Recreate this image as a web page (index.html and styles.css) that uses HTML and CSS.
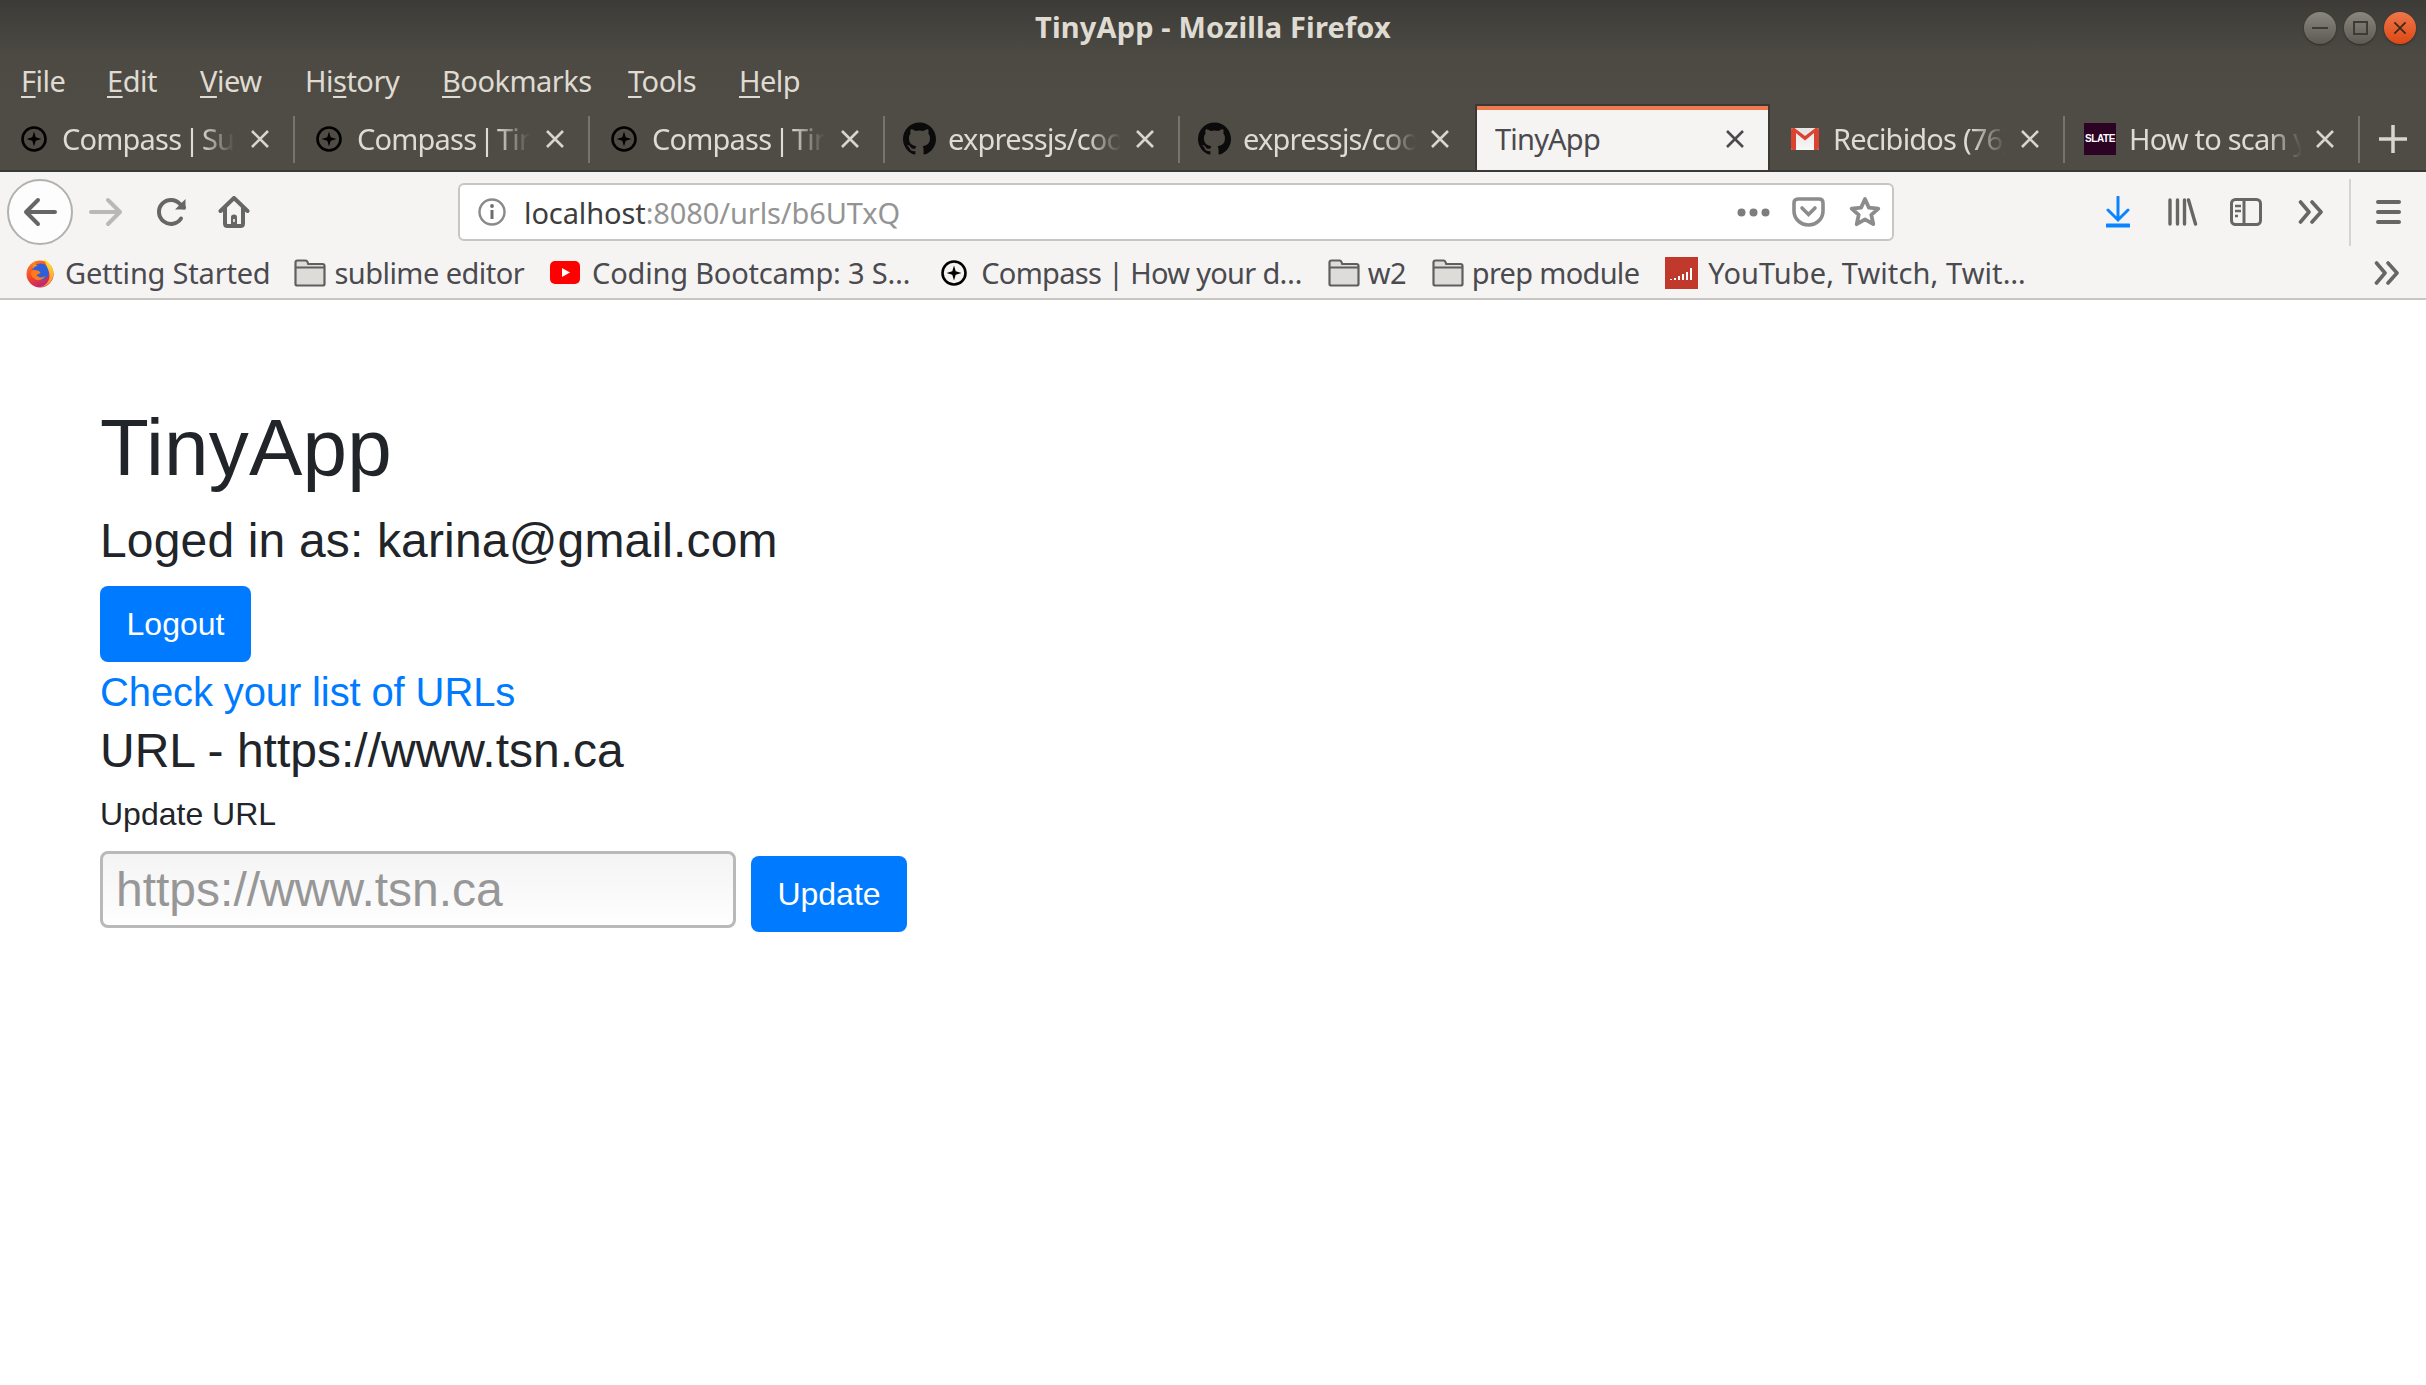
FILE: index.html
```html
<!DOCTYPE html>
<html lang="en">
<head>
  <meta charset="UTF-8">
  <title>TinyApp - Mozilla Firefox</title>
  <link rel="stylesheet" href="styles.css">
</head>
<body>
  <svg class="defs" width="0" height="0">
    <defs>
      <linearGradient id="fx-body" x1="0" y1="0" x2="0.6" y2="1">
        <stop offset="0" stop-color="#ff8a1e"/>
        <stop offset="0.55" stop-color="#f0442c"/>
        <stop offset="1" stop-color="#b8217a"/>
      </linearGradient>
      <linearGradient id="fx-flame" x1="0" y1="0" x2="0" y2="1">
        <stop offset="0" stop-color="#ffe03a"/>
        <stop offset="1" stop-color="#ff8f1e"/>
      </linearGradient>
      <linearGradient id="gmail-env" x1="0" y1="0" x2="0" y2="1">
        <stop offset="0" stop-color="#e4e4e4"/>
        <stop offset="1" stop-color="#f7f7f7"/>
      </linearGradient>
    </defs>
    <symbol id="compass" viewBox="0 0 26 26">
      <circle cx="13" cy="13" r="11.5" fill="none" stroke="#000" stroke-width="2.6"/>
      <path d="M13 5.5l1.7 5.8 5.8 1.7-5.8 1.7-1.7 5.8-1.7-5.8-5.8-1.7 5.8-1.7z" fill="#000"/>
    </symbol>
    <symbol id="github" viewBox="0 0 24 24">
      <path fill="#0b0b0b" d="M12 .297c-6.63 0-12 5.373-12 12 0 5.303 3.438 9.8 8.205 11.385.6.113.82-.258.82-.577 0-.285-.01-1.04-.015-2.04-3.338.724-4.042-1.61-4.042-1.61C4.422 18.07 3.633 17.7 3.633 17.7c-1.087-.744.084-.729.084-.729 1.205.084 1.838 1.236 1.838 1.236 1.07 1.835 2.809 1.305 3.495.998.108-.776.417-1.305.76-1.605-2.665-.3-5.466-1.332-5.466-5.93 0-1.31.465-2.38 1.235-3.22-.135-.303-.54-1.523.105-3.176 0 0 1.005-.322 3.3 1.23.96-.267 1.98-.399 3-.405 1.02.006 2.04.138 3 .405 2.28-1.552 3.285-1.23 3.285-1.23.645 1.653.24 2.873.12 3.176.765.84 1.23 1.91 1.23 3.22 0 4.61-2.805 5.625-5.475 5.92.42.36.81 1.096.81 2.22 0 1.606-.015 2.896-.015 3.286 0 .315.21.69.825.57C20.565 22.092 24 17.592 24 12.297c0-6.627-5.373-12-12-12"/>
    </symbol>
    <symbol id="close" viewBox="0 0 20 20">
      <path d="M2 2l16 16M18 2L2 18" fill="none" stroke="currentColor" stroke-width="2.6"/>
    </symbol>
    <symbol id="folder" viewBox="0 0 32 28">
      <path d="M1.5 25V3.5q0-2 2-2h8q1.500 0 2 1.500l.7 2h14.300q2 0 2 2V25q0 1.500-2 1.500h-25q-2 0-2-1.500z" fill="#dedcd9" stroke="#5f5f5f" stroke-width="2.200"/>
      <path d="M1.500 8.500h29" stroke="#5f5f5f" stroke-width="2"/>
    </symbol>
    <symbol id="chevrons" viewBox="0 0 26 24">
      <path d="M2.500 2l8.500 10-8.500 10M14 2l9 10-9 10" fill="none" stroke="currentColor" stroke-width="3.600" stroke-linecap="round" stroke-linejoin="round"/>
    </symbol>
  </svg>

  <header class="chrome">
    <div class="titlebar">
      <span></span>
      <div class="window-title">TinyApp - Mozilla Firefox</div>
      <div class="window-buttons">
        <span class="win-btn"><i class="win-min"></i></span>
        <span class="win-btn"><i class="win-max"></i></span>
        <span class="win-btn win-close">
          <svg width="14" height="14"><use href="#close"/></svg>
        </span>
      </div>
    </div>

    <nav class="menubar">
      <span class="menu-file"><u>F</u>ile</span>
      <span class="menu-edit"><u>E</u>dit</span>
      <span class="menu-view"><u>V</u>iew</span>
      <span class="menu-history">Hi<u>s</u>tory</span>
      <span class="menu-bookmarks"><u>B</u>ookmarks</span>
      <span class="menu-tools"><u>T</u>ools</span>
      <span class="menu-help"><u>H</u>elp</span>
    </nav>

    <div class="tabstrip">
      <div class="tab">
        <svg class="tab-icon"><use href="#compass"/></svg>
        <span class="tab-label tab-label-compass">Compass | Support</span>
        <svg class="tab-close"><use href="#close"/></svg>
      </div>
      <div class="tab">
        <svg class="tab-icon"><use href="#compass"/></svg>
        <span class="tab-label tab-label-compass">Compass | TinyApp</span>
        <svg class="tab-close"><use href="#close"/></svg>
      </div>
      <div class="tab">
        <svg class="tab-icon"><use href="#compass"/></svg>
        <span class="tab-label tab-label-compass">Compass | TinyApp</span>
        <svg class="tab-close"><use href="#close"/></svg>
      </div>
      <div class="tab">
        <svg class="tab-icon tab-icon-gh"><use href="#github"/></svg>
        <span class="tab-label">expressjs/cookie-session</span>
        <svg class="tab-close"><use href="#close"/></svg>
      </div>
      <div class="tab tab-before-active">
        <svg class="tab-icon tab-icon-gh"><use href="#github"/></svg>
        <span class="tab-label">expressjs/cookie-session</span>
        <svg class="tab-close"><use href="#close"/></svg>
      </div>
      <div class="tab tab-active">
        <span class="tab-label">TinyApp</span>
        <svg class="tab-close"><use href="#close"/></svg>
      </div>
      <div class="tab">
        <svg class="tab-icon tab-icon-gmail" viewBox="0 0 28 22">
          <rect x="0" y="0" width="28" height="22" rx="2" fill="url(#gmail-env)"/>
          <path d="M14 12.500L26 2.500V0H24.500L14 8 3.500 0H2v2.500z" fill="#d9432f"/>
          <path d="M0 2q0-2 2.500-2L5 2v20H2q-2 0-2-2zM28 2q0-2-2.500-2L23 2v20h3q2 0 2-2z" fill="#d9432f"/>
        </svg>
        <span class="tab-label">Recibidos (76)</span>
        <svg class="tab-close"><use href="#close"/></svg>
      </div>
      <div class="tab">
        <span class="slate-icon">SLATE</span>
        <span class="tab-label">How to scan your</span>
        <svg class="tab-close"><use href="#close"/></svg>
      </div>
      <svg class="new-tab" viewBox="0 0 28 28"><path d="M14 0v28M0 14h28" stroke="#d8d5ce" stroke-width="3.500"/></svg>
    </div>

    <div class="toolbar">
      <button class="back-btn">
        <svg width="34" height="30" viewBox="0 0 34 30"><path d="M32 15H3M15 3L3 15l12 12" fill="none" stroke="#666" stroke-width="4" stroke-linecap="round" stroke-linejoin="round"/></svg>
      </button>
      <svg class="tool-forward" width="34" height="30" viewBox="0 0 34 30"><path d="M2 15h29M19 3l12 12-12 12" fill="none" stroke="#b8b8b6" stroke-width="4" stroke-linecap="round" stroke-linejoin="round"/></svg>
      <svg class="tool-reload" width="31" height="30" viewBox="0 0 31 30"><path d="M25 21.500A12 12 0 1 1 24 7l4 3.500" fill="none" stroke="#666" stroke-width="4" stroke-linecap="round"/><path d="M29.500 2v10.500H19z" fill="#666"/></svg>
      <svg class="tool-home" width="32" height="32" viewBox="0 0 32 32"><path d="M2.500 15L16 2l13.500 13M7 12v15.500q0 2.500 2.500 2.500h13q2.500 0 2.500-2.500V12" fill="none" stroke="#666" stroke-width="4" stroke-linecap="round" stroke-linejoin="round"/><path d="M13 30v-9q0-2.500 3-2.500t3 2.500v9z" fill="#666"/><path d="M15.200 23h1.600v3h-1.600z" fill="#f5f4f2"/></svg>

      <div class="urlbar">
        <svg class="url-info" width="28" height="28" viewBox="0 0 28 28"><circle cx="14" cy="14" r="12.500" fill="none" stroke="#8a8a8a" stroke-width="2.400"/><path d="M14 12v9" stroke="#6d6d6d" stroke-width="3"/><circle cx="14" cy="8" r="1.900" fill="#6d6d6d"/></svg>
        <span class="url-text">localhost<span class="url-dim">:8080/urls/b6UTxQ</span></span>
        <svg class="url-dots" width="33" height="9" viewBox="0 0 33 9"><circle cx="4.500" cy="4.500" r="4" fill="#7d7d7d"/><circle cx="16.500" cy="4.500" r="4" fill="#7d7d7d"/><circle cx="28.500" cy="4.500" r="4" fill="#7d7d7d"/></svg>
        <svg class="url-pocket" width="33" height="30" viewBox="0 0 33 30"><path d="M2 6q0-4 4-4h21q4 0 4 4v8a14.500 14 0 0 1-29 0z" fill="none" stroke="#8c8c8c" stroke-width="3.600" stroke-linejoin="round"/><path d="M10 11l6.500 6.500L23 11" fill="none" stroke="#8c8c8c" stroke-width="3.600" stroke-linecap="round"/></svg>
        <svg class="url-star" width="32" height="32" viewBox="0 0 32 32"><path d="M16 3l3.900 8.600 9.400 1-7 6.300 2 9.300-8.300-4.800-8.300 4.800 2-9.300-7-6.300 9.400-1z" fill="none" stroke="#8c8c8c" stroke-width="3.800" stroke-linejoin="round"/></svg>
      </div>

      <svg class="tool-download" width="24" height="32" viewBox="0 0 24 32"><path d="M12 1v22M2 14l10 10 10-10" fill="none" stroke="#0a84ff" stroke-width="3" stroke-linecap="round"/><path d="M1 29.500h22" stroke="#0a84ff" stroke-width="4" stroke-linecap="round"/></svg>
      <svg class="tool-library" width="30" height="28" viewBox="0 0 30 28"><path d="M2 2v24M9.500 2v24M16.500 2v24M20.500 2l7 24" fill="none" stroke="#666" stroke-width="3.400" stroke-linecap="round"/></svg>
      <svg class="tool-sidebar" width="32" height="28" viewBox="0 0 32 28"><rect x="1.500" y="1.500" width="29" height="25" rx="4" fill="none" stroke="#666" stroke-width="3"/><path d="M14 2v24" stroke="#666" stroke-width="3"/><path d="M5 8h6M5 13h6M5 18h3" stroke="#666" stroke-width="2.400"/></svg>
      <svg class="tool-more"><use href="#chevrons"/></svg>
      <span class="tool-sep"></span>
      <svg class="tool-menu" width="25" height="24" viewBox="0 0 25 24"><path d="M2 2h21M2 12h21M2 22h21" stroke="#666" stroke-width="4" stroke-linecap="round"/></svg>
    </div>

    <div class="bookmarks">
      <span class="mark mark-wide">
        <svg class="mark-icon" width="30" height="30" viewBox="0 0 30 30">
          <circle cx="15" cy="16" r="13.500" fill="url(#fx-body)"/>
          <circle cx="15.500" cy="14" r="8.500" fill="#2e5fd8"/>
          <path d="M19 1c6 4 10 9 9.500 15-.500 7-6 13-13.500 13 5-1 9-5 9.500-10 .500-6-3-10-5.500-18z" fill="url(#fx-flame)"/>
          <path d="M8 11c-1-3 0-6 2-8-.500 3 1 4 3 5-3 0-4 1-5 3z" fill="#ff8a1e"/>
          <path d="M7.500 12c3 0 7 0 8 3-1 1-3 1-4 2 2 3 6 3 9 1-2 4-8 6-12 2-3-2-3-6-1-8z" fill="#ff7a1e"/>
        </svg>
        Getting Started
      </span>
      <span class="mark mark-sublime"><svg class="mark-folder"><use href="#folder"/></svg>sublime editor</span>
      <span class="mark mark-wide">
        <svg class="mark-icon mark-yt" width="30" height="23" viewBox="0 0 30 23"><rect width="30" height="23" rx="5" fill="#f00"/><path d="M12 7l8 4.500-8 4.500z" fill="#fff"/></svg>
        Coding Bootcamp: 3 S…
      </span>
      <span class="mark mark-compass-link"><svg class="mark-compass"><use href="#compass"/></svg>Compass | How your d…</span>
      <span class="mark"><svg class="mark-folder"><use href="#folder"/></svg>w2</span>
      <span class="mark"><svg class="mark-folder"><use href="#folder"/></svg>prep module</span>
      <span class="mark mark-widest">
        <svg class="mark-icon" width="33" height="32" viewBox="0 0 33 32"><rect width="33" height="32" fill="#c0392b"/><path d="M6 23v-1M10 23v-2M14 23v-4M18 23v-6M22 23v-8M26 23V11" stroke="#fff" stroke-width="2"/></svg>
        YouTube, Twitch, Twit…
      </span>
      <svg class="mark-more"><use href="#chevrons"/></svg>
    </div>
  </header>

  <main class="page">
    <h1 class="app-title">TinyApp</h1>
    <h4 class="heading-4 heading-user">Loged in as: karina@gmail.com</h4>
    <button class="btn">Logout</button>
    <a class="list-link" href="#">Check your list of URLs</a>
    <h4 class="heading-4">URL - https://www.tsn.ca</h4>
    <label class="field-label" for="long-url">Update URL</label>
    <form class="update-form">
      <input class="url-input" id="long-url" type="text" placeholder="https://www.tsn.ca">
      <button class="btn btn-update" type="button">Update</button>
    </form>
  </main>
</body>
</html>
```

FILE: styles.css
```css
* {
  margin: 0;
  padding: 0;
  box-sizing: border-box;
}

body {
  background: #fff;
  font-family: "Liberation Sans", Arial, sans-serif;
  color: #212529;
}

.defs {
  display: block;
  height: 0;
}

/* browser frame */
.chrome {
  font-family: "Noto Sans", sans-serif;
  font-size: 29px;
  border-bottom: 2px solid #c8c6c2;
  background: #f5f4f2;
}

.titlebar {
  height: 56px;
  display: grid;
  grid-template-columns: 1fr auto 1fr;
  align-items: center;
  padding: 0 10px;
  background: linear-gradient(#3c3b37, #4c4a43);
}

.window-title {
  margin-top: -4px;
  font-size: 29px;
  font-weight: 700;
  letter-spacing: 0.15px;
  color: #dfdbd2;
}

.window-buttons {
  display: flex;
  justify-content: flex-end;
  gap: 8px;
}

.win-btn {
  width: 32px;
  height: 32px;
  border-radius: 50%;
  display: flex;
  align-items: center;
  justify-content: center;
  background: linear-gradient(#8a877f, #5c5a53);
  box-shadow: 0 1px 2px #2b2a27;
}

.win-min {
  width: 16px;
  height: 2px;
  background: #3c3b37;
}

.win-max {
  width: 15px;
  height: 14px;
  border: 2px solid #3c3b37;
}

.win-close {
  background: linear-gradient(#f0764a, #dd4814);
  color: #3c2a20;
}

.menubar {
  height: 52px;
  display: flex;
  align-items: center;
  padding: 0 0 4px 21px;
  background: linear-gradient(#4c4a43, #4f4c45);
  color: #dfdbd2;
  letter-spacing: -0.5px;
}

.menubar span {
  display: block;
}

.menubar u {
  text-underline-offset: 4px;
  text-decoration-thickness: 2px;
}

.menu-file { width: 86px; }
.menu-edit { width: 93px; }
.menu-view { width: 105px; }
.menu-history { width: 137px; }
.menu-bookmarks { width: 186px; }
.menu-tools { width: 111px; }

.tabstrip {
  height: 64px;
  display: flex;
  background: #4f4c45;
  border-bottom: 2px solid #3a3936;
  color: #dfdbd2;
  letter-spacing: -0.8px;
}

.tab {
  width: 295px;
  height: 62px;
  display: flex;
  align-items: center;
  padding: 0 0 1px 21px;
  position: relative;
}

/* short divider between the background tabs */
.tab::after {
  content: "";
  position: absolute;
  right: 0;
  top: 8px;
  width: 2px;
  height: 47px;
  background: #77746d;
}

.tab-before-active::after,
.tab-active::after {
  display: none;
}

.tab-icon {
  width: 26px;
  height: 26px;
  flex: none;
  margin-right: 15px;
}

.tab-icon-gh {
  width: 33px;
  height: 33px;
  margin-left: -3px;
  margin-right: 12px;
}

.tab-icon-gmail {
  width: 28px;
  height: 22px;
  margin-right: 14px;
}

.slate-icon {
  width: 32px;
  height: 32px;
  flex: none;
  margin-right: 13px;
  margin-left: -2px;
  background: #2d0324;
  color: #fff;
  font-family: "Liberation Sans", sans-serif;
  font-size: 10px;
  font-weight: 700;
  letter-spacing: -0.4px;
  line-height: 32px;
  text-align: center;
}

.tab-label {
  width: 173px;
  flex: none;
  overflow: hidden;
  white-space: nowrap;
  -webkit-mask-image: linear-gradient(to right, #000 80%, transparent 100%);
  mask-image: linear-gradient(to right, #000 80%, transparent 100%);
}

.tab-label-compass {
  word-spacing: -4px;
}

.tab-close {
  width: 20px;
  height: 20px;
  flex: none;
  position: absolute;
  right: 25px;
  top: 21px;
  color: #d8d5ce;
}

.tab-active {
  height: 66px;
  margin-top: -4px;
  padding-left: 18px;
  background: #f5f4f2;
  border: solid #3a3936;
  border-width: 2px 2px 0;
  box-shadow: inset 0 4px 0 #f0794e;
  color: #4a4a4f;
}

.tab-active .tab-label {
  width: 200px;
  -webkit-mask-image: none;
  mask-image: none;
  margin-top: 2px;
}

.tab-active .tab-close {
  color: #4a4a4f;
  right: 23px;
  top: 23px;
}

.new-tab {
  width: 28px;
  height: 28px;
  margin: 17px 0 0 19px;
}

.toolbar {
  height: 78px;
  display: flex;
  align-items: center;
  padding: 2px 0 0 7px;
}

.back-btn {
  width: 66px;
  height: 66px;
  flex: none;
  display: flex;
  align-items: center;
  justify-content: center;
  background: #fdfdfd;
  border: 2px solid #b1b1b0;
  border-radius: 50%;
}

.tool-forward { margin-left: 16px; flex: none; }
.tool-reload { margin-left: 33px; flex: none; }
.tool-home { margin-left: 31px; flex: none; }

.urlbar {
  width: 1436px;
  height: 58px;
  flex: none;
  margin-left: 208px;
  display: flex;
  align-items: center;
  padding-left: 18px;
  background: #fff;
  border: 2px solid #c8c6c2;
  border-radius: 6px;
  color: #3d3d3d;
  letter-spacing: -0.1px;
}

.url-info { flex: none; }
.url-text { margin-left: 18px; flex: 1; }
.url-dim { color: #949494; }
.url-dots { flex: none; }
.url-pocket { flex: none; margin-left: 22px; }
.url-star { flex: none; margin-left: 24px; margin-right: 11px; }

.tool-download { flex: none; margin-left: 212px; }
.tool-library { flex: none; margin-left: 38px; }
.tool-sidebar { flex: none; margin-left: 32px; }

.tool-more {
  width: 26px;
  height: 24px;
  flex: none;
  margin-left: 36px;
  color: #666;
}

.tool-sep {
  width: 2px;
  height: 67px;
  flex: none;
  margin-left: 25px;
  background: #d6d4d0;
}

.tool-menu { flex: none; margin-left: 25px; }

.bookmarks {
  height: 48px;
  display: flex;
  align-items: center;
  gap: 26px;
  padding: 0 0 3px 25px;
  color: #4a4a4f;
  letter-spacing: -0.7px;
}

.mark {
  display: flex;
  align-items: center;
  white-space: nowrap;
}

.mark-wide { letter-spacing: -0.2px; }
.mark-widest { letter-spacing: 0.1px; }

.mark-sublime {
  margin-left: -2px;
  letter-spacing: -0.55px;
}

.mark-compass-link {
  margin-left: 5px;
}

.mark-icon {
  flex: none;
  margin-right: 10px;
}

.mark-yt {
  margin-right: 12px;
}

.mark-folder {
  width: 32px;
  height: 28px;
  flex: none;
  margin-right: 8px;
}

.mark-compass {
  width: 26px;
  height: 26px;
  flex: none;
  margin-right: 14px;
}

.mark-more {
  width: 28px;
  height: 24px;
  flex: none;
  margin-left: auto;
  margin-right: 25px;
  color: #666;
}

/* page content, bootstrap sizes at 2x */
.page {
  padding: 100px 0 0 100px;
}

.app-title {
  font-size: 80px;
  font-weight: 500;
  line-height: 96px;
  letter-spacing: 0.2px;
  margin-bottom: 16px;
}

.heading-4 {
  font-size: 48px;
  font-weight: 500;
  line-height: 58px;
  margin-bottom: 16px;
}

.heading-user {
  letter-spacing: 0.16px;
}

.btn {
  display: block;
  width: 151px;
  height: 76px;
  background: #007bff;
  color: #fff;
  border: none;
  border-radius: 8px;
  font-family: inherit;
  font-size: 32px;
}

.list-link {
  display: block;
  margin: 6px 0;
  font-size: 40px;
  line-height: 48px;
  letter-spacing: -0.12px;
  color: #007bff;
  text-decoration: none;
}

.field-label {
  display: block;
  margin: -6px 0 13px;
  font-size: 32px;
  line-height: 48px;
}

.update-form {
  display: flex;
  align-items: flex-start;
}

.url-input {
  width: 636px;
  height: 77px;
  padding: 0 13px;
  background: linear-gradient(#f4f4f4, #fefefe);
  border: 3px solid #b9b9b9;
  border-radius: 8px;
  font-family: inherit;
  font-size: 48px;
}

.url-input::placeholder {
  color: #979797;
  opacity: 1;
}

.btn-update {
  width: 156px;
  margin: 5px 0 0 15px;
}
```
